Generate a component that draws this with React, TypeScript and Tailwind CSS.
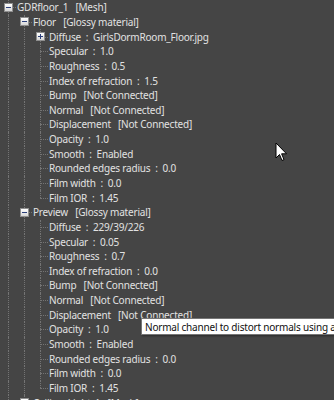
import React from "react";

type Node = {
  label: string;
  open?: boolean;
  children?: Node[];
};

const props = (diffuse: string, spec: string, rough: string, ior: string): Node[] => [
  { label: `Diffuse  :  ${diffuse}` },
  { label: `Specular  :  ${spec}` },
  { label: `Roughness  :  ${rough}` },
  { label: `Index of refraction  :  ${ior}` },
  { label: "Bump   [Not Connected]" },
  { label: "Normal   [Not Connected]" },
  { label: "Displacement   [Not Connected]" },
  { label: "Opacity  :  1.0" },
  { label: "Smooth  :  Enabled" },
  { label: "Rounded edges radius  :  0.0" },
  { label: "Film width  :  0.0" },
  { label: "Film IOR  :  1.45" },
];

const floorProps = props("GirlsDormRoom_Floor.jpg", "1.0", "0.5", "1.5");
floorProps[0] = { label: "Diffuse  :  GirlsDormRoom_Floor.jpg", open: false, children: [{ label: "x" }] };

const tree: Node[] = [
  {
    label: "GDRfloor_1   [Mesh]",
    open: true,
    children: [
      { label: "Floor   [Glossy material]", open: true, children: floorProps },
      { label: "Preview   [Glossy material]", open: true, children: props("229/39/226", "0.05", "0.7", "0.0") },
      { label: "Ceiling_Light_1   [Mesh]", open: false, children: [{ label: "x" }] },
    ],
  },
  { label: "GDRwall_1   [Mesh]" },
];

type Row = { node: Node; guides: boolean[]; last: boolean };

function flatten(nodes: Node[], guides: boolean[], out: Row[]) {
  nodes.forEach((n, i) => {
    const last = i === nodes.length - 1;
    out.push({ node: n, guides, last });
    if (n.open && n.children) flatten(n.children, [...guides, !last], out);
  });
  return out;
}

function Box({ open }: { open: boolean }) {
  return (
    <div className="relative z-10 w-[9px] h-[9px] border border-[#8f8f8f] bg-gradient-to-b from-white to-[#d6d6d6] flex items-center justify-center">
      <div className="w-[5px] h-px bg-[#2b3f7a]" />
      {!open && <div className="absolute w-px h-[5px] bg-[#2b3f7a]" />}
    </div>
  );
}

function TreeRow({ row }: { row: Row }) {
  const { node, guides, last } = row;
  const hasKids = !!node.children;
  return (
    <div className="flex h-[14.65px] items-stretch">
      {guides.map((g, i) => (
        <div key={i} className="w-[16px] flex justify-center">
          {g && <div className="w-px h-full border-l border-dotted border-[#747474]" />}
        </div>
      ))}
      <div className="relative w-[16px] flex items-center justify-center">
        <div
          className={`absolute left-[8px] top-0 w-px border-l border-dotted border-[#747474] ${last ? "h-1/2" : "h-full"}`}
        />
        <div className="absolute left-[8px] right-0 top-1/2 h-px border-t border-dotted border-[#747474]" />
        {hasKids && <Box open={!!node.open} />}
      </div>
      <div className="ml-[1px] flex items-center whitespace-pre text-[10px] tracking-[-0.2px] text-[#e2e2e2] leading-none">
        {node.label}
      </div>
    </div>
  );
}

export default function App() {
  const rows = flatten(tree, [], []);
  return (
    <div
      className="relative w-[334px] h-[400px] overflow-hidden bg-[#454545]"
      style={{ fontFamily: '"Noto Sans", "Open Sans", sans-serif' }}
    >
      {rows.map((r, i) => (
        <TreeRow key={i} row={r} />
      ))}

      {/* tooltip */}
      <div className="absolute left-[141px] top-[318px] h-[17px] pl-[3px] pr-2 flex items-center bg-white border border-[#767676] text-[10px] tracking-[-0.2px] text-[#111] whitespace-nowrap leading-none shadow-[1px_1px_2px_rgba(0,0,0,0.4)]">
        Normal channel to distort normals using an image
      </div>

      {/* mouse cursor */}
      <svg className="absolute left-[275px] top-[142px]" width="13" height="20" viewBox="0 0 13 20">
        <path d="M1 1 L1 16 L4.5 12.5 L7 18.5 L9 17.6 L6.6 11.8 L11.5 11.8 Z" fill="#fff" stroke="#000" strokeWidth="1" />
      </svg>
    </div>
  );
}
